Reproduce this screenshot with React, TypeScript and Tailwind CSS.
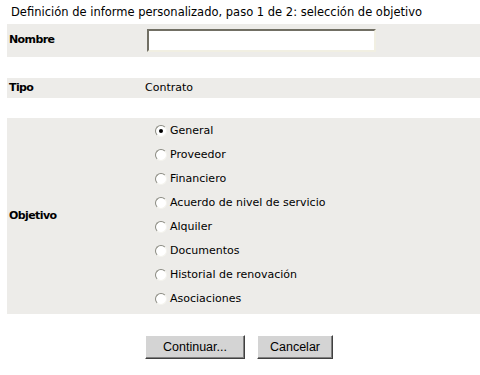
import React, { useState } from 'react'

const targets = [
  'General',
  'Proveedor',
  'Financiero',
  'Acuerdo de nivel de servicio',
  'Alquiler',
  'Documentos',
  'Historial de renovación',
  'Asociaciones'
]

function Radio({ checked }: { checked: boolean }) {
  return (
    <span className="relative inline-block w-[12px] h-[12px] rounded-full bg-white border border-t-[#8a8a80] border-l-[#8a8a80] border-b-[#f4f3ee] border-r-[#f4f3ee] shrink-0">
      {checked && (
        <span className="absolute left-[3px] top-[3px] w-[4px] h-[4px] rounded-full bg-black" />
      )}
    </span>
  )
}

export default function App() {
  const [target, setTarget] = useState('General')

  return (
    <div className="w-[480px] h-[375px] bg-white text-black text-[11px] font-['DejaVu_Sans',sans-serif]">
      <div className="h-[24px] pl-[11px] pt-px flex items-center text-[11.5px]">
        Definición de informe personalizado, paso 1 de 2: selección de objetivo
      </div>

      <div className="ml-[7px] flex flex-col">
        <div className="h-[33px] bg-[#edece9] flex items-center">
          <div className="w-[138px] pl-[2px] font-bold tracking-[-0.6px]">Nombre</div>
          <input
            type="text"
            className="ml-[2px] w-[229px] h-[23px] bg-white border-2 border-t-[#716f64] border-l-[#716f64] border-b-[#f1efe2] border-r-[#f1efe2] outline-none px-1"
          />
        </div>

        <div className="h-[21px]" />

        <div className="h-[20px] bg-[#edece9] flex items-center">
          <div className="w-[138px] pl-[2px] font-bold tracking-[-0.6px]">Tipo</div>
          <div>Contrato</div>
        </div>

        <div className="h-[20px]" />

        <div className="bg-[#edece9] flex items-center">
          <div className="w-[138px] pl-[2px] font-bold tracking-[-0.6px]">Objetivo</div>
          <div className="flex flex-col pt-px pb-[3px] pl-[10px]">
            {targets.map((t) => (
              <label
                key={t}
                className="h-[24px] flex items-center gap-[3px] cursor-default"
                onClick={() => setTarget(t)}
              >
                <Radio checked={target === t} />
                <span>{t}</span>
              </label>
            ))}
          </div>
        </div>
      </div>

      <div className="mt-[21px] pl-[145px] flex gap-[12px] font-['Liberation_Sans',sans-serif] text-[12.5px]">
        <button className="w-[100px] h-[24px] bg-[#d4d4d4] border border-t-white border-l-white border-b-[#404040] border-r-[#404040] shadow-[inset_-1px_-1px_0_#808080]">
          Continuar...
        </button>
        <button className="w-[76px] h-[24px] bg-[#d4d4d4] border border-t-white border-l-white border-b-[#404040] border-r-[#404040] shadow-[inset_-1px_-1px_0_#808080]">
          Cancelar
        </button>
      </div>
    </div>
  )
}
